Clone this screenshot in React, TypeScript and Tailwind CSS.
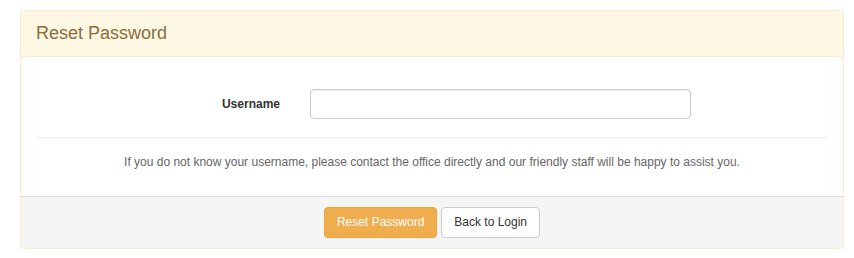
import React from 'react';

export default function App() {
  return (
    <div className="min-h-[258px] bg-white pl-[20px] pr-[10px] pt-[10px] font-['Liberation_Sans',Arial,sans-serif] text-[12px] leading-[17px] text-[#333]">
      <div className="rounded-[4px] border border-[#faebcc] bg-white">
        <div className="rounded-t-[3px] border-b border-[#faebcc] bg-[#fcf8e3] px-[15px] py-[10px]">
          <h3 className="text-[18px] leading-[25px] text-[#8a6d3b]">Reset Password</h3>
        </div>

        <div className="px-[15px] pt-[32px] pb-[25px]">
          <div className="-mx-[15px] flex items-center">
            <label
              htmlFor="username"
              className="w-1/3 pr-[15px] text-right font-bold"
            >
              Username
            </label>
            <div className="w-1/2 px-[15px]">
              <input
                id="username"
                type="text"
                className="block h-[30px] w-full rounded-[4px] border border-[#ccc] bg-white px-[10px] text-[12px] shadow-[inset_0_1px_1px_rgba(0,0,0,0.075)] outline-none"
              />
            </div>
          </div>

          <hr className="mt-[18px] border-t border-[#eee]" />

          <p className="mt-[16px] text-center text-[#666]">
            If you do not know your username, please contact the office directly and our friendly staff will be happy to assist you.
          </p>
        </div>

        <div className="flex justify-center gap-[4px] rounded-b-[3px] border-t border-[#ddd] bg-[#f5f5f5] px-[15px] py-[10px]">
          <button
            type="button"
            className="h-[31px] rounded-[4px] border border-[#eea236] bg-[#f0ad4e] px-[12px] text-[12px] text-white"
          >
            Reset Password
          </button>
          <button
            type="button"
            className="h-[31px] rounded-[4px] border border-[#ccc] bg-white px-[12px] text-[12px] text-[#333]"
          >
            Back to Login
          </button>
        </div>
      </div>
    </div>
  );
}
